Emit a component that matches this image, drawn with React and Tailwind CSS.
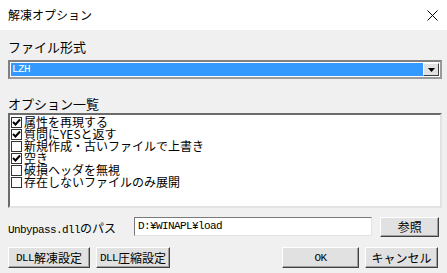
import React from 'react';

const jp = { fontFamily: '"Noto Sans CJK JP", "Noto Sans", sans-serif' };
const mono = { fontFamily: '"Liberation Mono", "Noto Sans CJK JP", monospace' };

// classic 3D push button
function Btn({ children, className = '' }) {
  return (
    <div className={`flex items-center justify-center whitespace-nowrap bg-[#e1e1e1] border border-t-white border-l-white border-r-[#404040] border-b-[#404040] shadow-[inset_-1px_-1px_0_#a0a0a0] text-[12px] leading-[14px] text-black ${className}`} style={jp}>
      {children}
    </div>
  );
}

function Check({ checked }) {
  return (
    <div className="w-[11px] h-[11px] border border-[#333] bg-white flex items-center justify-center shrink-0">
      {checked && (
        <svg width="9" height="9" viewBox="0 0 9 9"><path d="M1 4 L3.5 6.5 L8 1.5" stroke="#000" strokeWidth="2" fill="none" /></svg>
      )}
    </div>
  );
}

// half-width latin in the dialog's gothic font
function Hw({ children }) {
  return <span className="text-[11px] tracking-[-0.6px]" style={mono}>{children}</span>;
}

export default function App() {
  const options = [
    { label: '属性を再現する', checked: true },
    { label: '質問にYESと返す', checked: true },
    { label: '新規作成・古いファイルで上書き', checked: false },
    { label: '空き', checked: true },
    { label: '破損ヘッダを無視', checked: false },
    { label: '存在しないファイルのみ展開', checked: false },
  ];
  return (
    <div className="w-[447px] h-[273px] overflow-hidden bg-[#f0f0f0] flex flex-col text-black" style={jp}>
      {/* title bar */}
      <div className="h-[30px] bg-white flex items-center justify-between pl-[8px] pr-[9px] shrink-0">
        <span className="text-[12px]">解凍オプション</span>
        <svg width="11" height="11" viewBox="0 0 11 11"><path d="M0.5 0.5 L10.5 10.5 M10.5 0.5 L0.5 10.5" stroke="#000" strokeWidth="1" /></svg>
      </div>

      <div className="flex flex-col px-[8px]">
        <div className="mt-[9px] h-[15px] leading-[15px] text-[13px]">ファイル形式</div>

        {/* combobox */}
        <div className="mt-[6px] h-[19px] w-[434px] border-2 border-t-[#808080] border-l-[#808080] border-r-[#9a9a9a] border-b-[#9a9a9a] bg-white p-[1px] flex">
          <div className="flex-1 bg-[#3399ff] text-white flex items-center pl-[1px] leading-none"><Hw>LZH</Hw></div>
          <div className="w-[16px] bg-[#e1e1e1] border border-t-white border-l-white border-r-[#404040] border-b-[#404040] flex items-center justify-center">
            <svg width="7" height="4" viewBox="0 0 7 4"><path d="M0 0 H7 L3.5 4 Z" fill="#000" /></svg>
          </div>
        </div>

        <div className="mt-[17px] h-[15px] leading-[15px] text-[13px]">オプション一覧</div>

        {/* option list */}
        <div className="mt-[2px] h-[95px] w-[434px] bg-white border-2 border-t-[#6b6b6b] border-l-[#6b6b6b] border-r-[#e3e3e3] border-b-[#e3e3e3] pt-[1px] pl-[1px]">
          {options.map((o) => (
            <div key={o.label} className="h-[12px] flex items-center gap-[2px] text-[12px] leading-[12px] whitespace-nowrap">
              <Check checked={o.checked} />
              <span className="leading-[12px]">{o.label}</span>
            </div>
          ))}
        </div>

        {/* path row */}
        <div className="mt-[8px] h-[21px] flex items-center">
          <span className="w-[127px] whitespace-nowrap">
            <Hw>Unbypass.dll</Hw>
            <span className="text-[12px]">のパス</span>
          </span>
          <div className="w-[240px] h-[19px] bg-white border border-t-[#7a7a7a] border-l-[#7a7a7a] border-r-[#e3e3e3] border-b-[#e3e3e3] flex items-center leading-none pl-[3px]"><Hw>D:¥WINAPL¥load</Hw></div>
          <Btn className="ml-[8px] w-[59px] h-[20px]">参照</Btn>
        </div>

        {/* buttons */}
        <div className="mt-[10px] h-[21px] flex">
          <Btn className="w-[82px] h-[21px]"><Hw>DLL</Hw>解凍設定</Btn>
          <Btn className="ml-[6px] w-[74px] h-[21px]"><Hw>DLL</Hw>圧縮設定</Btn>
          <Btn className="ml-auto w-[77px] h-[21px]"><Hw>OK</Hw></Btn>
          <Btn className="ml-[6px] w-[73px] h-[21px] mr-[1px]">キャンセル</Btn>
        </div>
      </div>
    </div>
  );
}
